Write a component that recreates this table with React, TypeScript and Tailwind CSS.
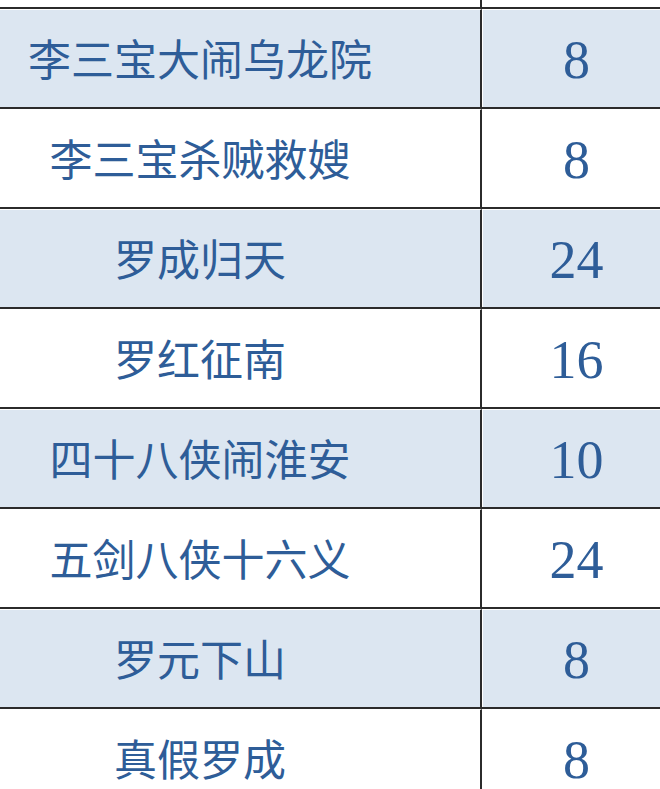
import React from "react";

const rows: { name: string; count: number }[] = [
  { name: "李三宝大闹乌龙院", count: 8 },
  { name: "李三宝杀贼救嫂", count: 8 },
  { name: "罗成归天", count: 24 },
  { name: "罗红征南", count: 16 },
  { name: "四十八侠闹淮安", count: 10 },
  { name: "五剑八侠十六义", count: 24 },
  { name: "罗元下山", count: 8 },
  { name: "真假罗成", count: 8 },
];

const App: React.FC = () => {
  return (
    <div className="w-[660px] h-[789px] overflow-hidden bg-white">
      <div className="flex h-[7px]">
        <div className="w-[482px] border-r-2 border-r-[#2b2b2b]" />
        <div className="flex-1" />
      </div>
      {rows.map((row, i) => {
        const bg = i % 2 === 0 ? "bg-[#dce6f1]" : "bg-white";
        return (
          <div
            key={i}
            className="flex h-[100px] shrink-0 border-t-2 border-t-[#2b2b2b]"
          >
            <div
              className={`w-[482px] flex items-center justify-center pr-[80px] pb-[2px] border-r-2 border-r-[#2b2b2b] border-t border-t-white ${bg}`}
            >
              <span className="text-[43px] leading-none text-[#2e5d98] font-['Noto_Sans_CJK_SC',sans-serif]">
                {row.name}
              </span>
            </div>
            <div
              className={`flex-1 flex items-center justify-center pl-[10px] pt-[3px] border-l border-l-white border-t border-t-white ${bg}`}
            >
              <span className="text-[54px] leading-none text-[#2e5d98] font-['Liberation_Serif',serif]">
                {row.count}
              </span>
            </div>
          </div>
        );
      })}
    </div>
  );
};

export default App;
